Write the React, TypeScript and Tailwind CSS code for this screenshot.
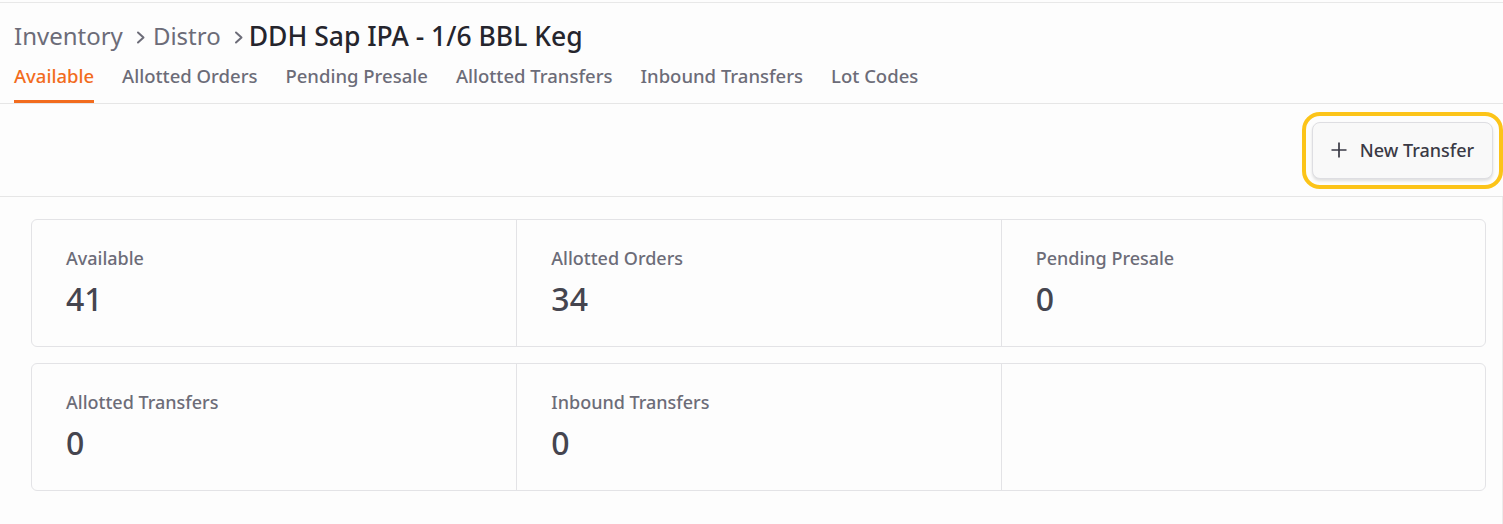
import React from "react";

const tabs = ["Available", "Allotted Orders", "Pending Presale", "Allotted Transfers", "Inbound Transfers", "Lot Codes"];

const stats: { label: string; value: string }[][] = [
  [
    { label: "Available", value: "41" },
    { label: "Allotted Orders", value: "34" },
    { label: "Pending Presale", value: "0" },
  ],
  [
    { label: "Allotted Transfers", value: "0" },
    { label: "Inbound Transfers", value: "0" },
    { label: "", value: "" },
  ],
];

function Chevron({ last }: { last?: boolean }) {
  return (
    <svg className={"ml-[13px] mt-[3px] " + (last ? "mr-[5px]" : "mr-[7px]")} width="10" height="13" viewBox="0 0 10 13" fill="none" stroke="#6c6c78" strokeWidth="2" strokeLinecap="round" strokeLinejoin="round">
      <path d="M2 1.5l5.5 5-5.5 5" />
    </svg>
  );
}

export default function App() {
  return (
    <div
      className="min-h-[524px] bg-[#fdfdfd] pt-[2px]"
      style={{ fontFamily: '"Noto Sans", "Open Sans", sans-serif' }}
    >
      <div className="border-t border-[#e8e8e8]">
        <div className="px-[14px] pt-[17px]">
          <div className="flex items-center text-[24px] leading-[32px]">
            <span className="text-[#6c6c78]">Inventory</span>
            <Chevron />
            <span className="text-[#6c6c78]">Distro</span>
            <Chevron last />
            <span className="text-[#25252d] text-[26.5px] font-medium">DDH Sap IPA - 1/6 BBL Keg</span>
          </div>
        </div>
        <div className="flex gap-[28px] px-[14px] pt-[11px] border-b border-[#e6e6e6]">
          {tabs.map((t, i) => (
            <div
              key={t}
              className={
                "pb-[11px] text-[18.5px] leading-[26px] font-medium border-b-[3px] " +
                (i === 0 ? "text-[#f26c1e] border-[#f26c1e]" : "text-[#6c6c78] border-transparent")
              }
            >
              {t}
            </div>
          ))}
        </div>
        <div className="h-[93px] flex items-center justify-end pr-[10px] border-b border-[#e6e6e6]">
          <button className="h-[57px] w-[181px] flex items-center justify-center gap-[13px] rounded-[8px] border border-[#dedee2] bg-[#f9f9f9] shadow-[0_2px_3px_rgba(0,0,0,0.12)] text-[18px] font-medium text-[#3a3a45] outline-[4px] outline-solid outline-[#fcc419] outline-offset-[6px]">
            <svg width="16" height="16" viewBox="0 0 16 16" fill="none" stroke="#3a3a45" strokeWidth="1.7">
              <path d="M8 0.5v15M0.5 8h15" />
            </svg>
            <span>New Transfer</span>
          </button>
        </div>
        <div className="pl-[31px] pr-[16px] pt-[22px] pb-[33px] flex flex-col gap-[16px] border-r border-[#ececec]">
          {stats.map((row, ri) => (
            <div key={ri} className="grid grid-cols-3 border border-[#e3e3e6] rounded-[6px] bg-[#fdfdfd]">
              {row.map((s, ci) => (
                <div
                  key={ci}
                  className={"h-[126px] pl-[34px] pt-[25px] " + (ci > 0 ? "border-l border-[#e3e3e6]" : "")}
                >
                  {s.label && (
                    <>
                      <div className="text-[18px] leading-[26px] font-medium text-[#6c6c78]">{s.label}</div>
                      <div className="text-[32px] leading-[38px] mt-[9px] font-medium text-[#45454f]">{s.value}</div>
                    </>
                  )}
                </div>
              ))}
            </div>
          ))}
        </div>
      </div>
    </div>
  );
}
